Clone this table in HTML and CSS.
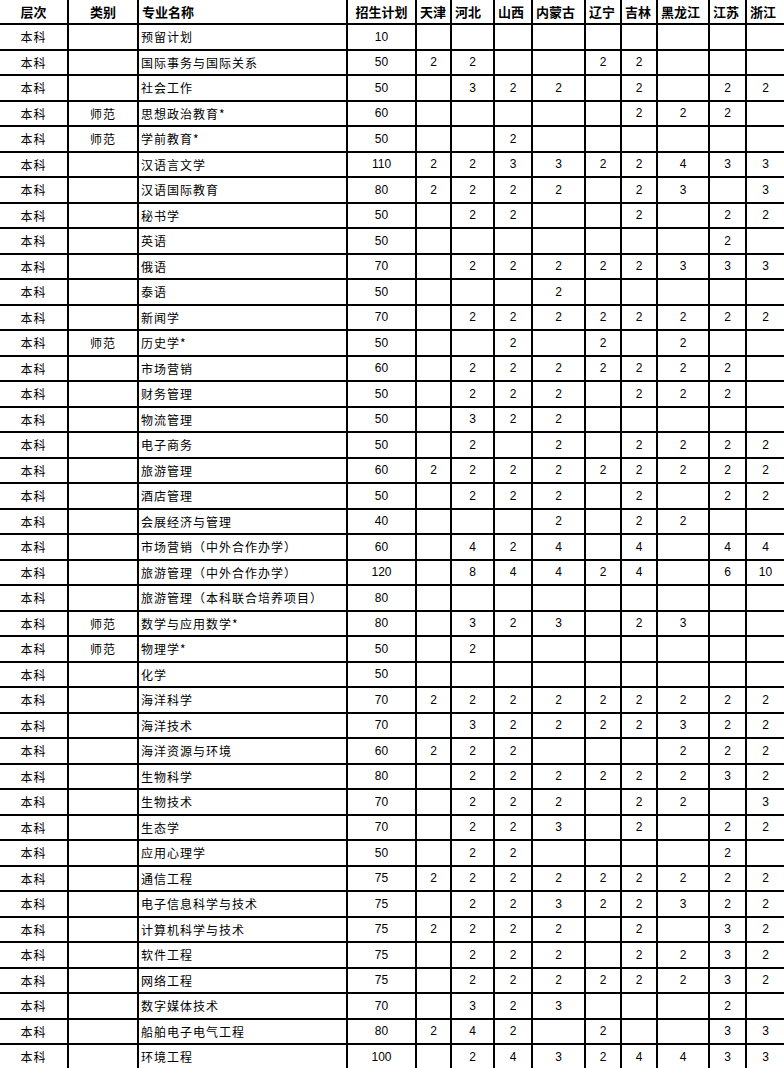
FILE: index.html
```html
<!DOCTYPE html>
<html lang="zh-CN">
<head>
<meta charset="utf-8">
<title>招生计划</title>
<link rel="stylesheet" href="styles.css">
</head>
<body>
<div class="sheet">
  <div class="h">层次</div><div class="h">类别</div><div class="h l">专业名称</div><div class="h">招生计划</div><div class="h l">天津</div><div class="h l">河北</div><div class="h l">山西</div><div class="h l">内蒙古</div><div class="h l">辽宁</div><div class="h l">吉林</div><div class="h l">黑龙江</div><div class="h l">江苏</div><div class="h l last">浙江</div>

  <div class="c">本科</div><div class="c"></div><div class="c l">预留计划</div><div class="n">10</div><div class="n"></div><div class="n"></div><div class="n"></div><div class="n"></div><div class="n"></div><div class="n"></div><div class="n"></div><div class="n"></div><div class="n last"></div>
  <div class="c">本科</div><div class="c"></div><div class="c l">国际事务与国际关系</div><div class="n">50</div><div class="n">2</div><div class="n">2</div><div class="n"></div><div class="n"></div><div class="n">2</div><div class="n">2</div><div class="n"></div><div class="n"></div><div class="n last"></div>
  <div class="c">本科</div><div class="c"></div><div class="c l">社会工作</div><div class="n">50</div><div class="n"></div><div class="n">3</div><div class="n">2</div><div class="n">2</div><div class="n"></div><div class="n">2</div><div class="n"></div><div class="n">2</div><div class="n last">2</div>
  <div class="c">本科</div><div class="c">师范</div><div class="c l">思想政治教育*</div><div class="n">60</div><div class="n"></div><div class="n"></div><div class="n"></div><div class="n"></div><div class="n"></div><div class="n">2</div><div class="n">2</div><div class="n">2</div><div class="n last"></div>
  <div class="c">本科</div><div class="c">师范</div><div class="c l">学前教育*</div><div class="n">50</div><div class="n"></div><div class="n"></div><div class="n">2</div><div class="n"></div><div class="n"></div><div class="n"></div><div class="n"></div><div class="n"></div><div class="n last"></div>
  <div class="c">本科</div><div class="c"></div><div class="c l">汉语言文学</div><div class="n">110</div><div class="n">2</div><div class="n">2</div><div class="n">3</div><div class="n">3</div><div class="n">2</div><div class="n">2</div><div class="n">4</div><div class="n">3</div><div class="n last">3</div>
  <div class="c">本科</div><div class="c"></div><div class="c l">汉语国际教育</div><div class="n">80</div><div class="n">2</div><div class="n">2</div><div class="n">2</div><div class="n">2</div><div class="n"></div><div class="n">2</div><div class="n">3</div><div class="n"></div><div class="n last">3</div>
  <div class="c">本科</div><div class="c"></div><div class="c l">秘书学</div><div class="n">50</div><div class="n"></div><div class="n">2</div><div class="n">2</div><div class="n"></div><div class="n"></div><div class="n">2</div><div class="n"></div><div class="n">2</div><div class="n last">2</div>
  <div class="c">本科</div><div class="c"></div><div class="c l">英语</div><div class="n">50</div><div class="n"></div><div class="n"></div><div class="n"></div><div class="n"></div><div class="n"></div><div class="n"></div><div class="n"></div><div class="n">2</div><div class="n last"></div>
  <div class="c">本科</div><div class="c"></div><div class="c l">俄语</div><div class="n">70</div><div class="n"></div><div class="n">2</div><div class="n">2</div><div class="n">2</div><div class="n">2</div><div class="n">2</div><div class="n">3</div><div class="n">3</div><div class="n last">3</div>
  <div class="c">本科</div><div class="c"></div><div class="c l">泰语</div><div class="n">50</div><div class="n"></div><div class="n"></div><div class="n"></div><div class="n">2</div><div class="n"></div><div class="n"></div><div class="n"></div><div class="n"></div><div class="n last"></div>
  <div class="c">本科</div><div class="c"></div><div class="c l">新闻学</div><div class="n">70</div><div class="n"></div><div class="n">2</div><div class="n">2</div><div class="n">2</div><div class="n">2</div><div class="n">2</div><div class="n">2</div><div class="n">2</div><div class="n last">2</div>
  <div class="c">本科</div><div class="c">师范</div><div class="c l">历史学*</div><div class="n">50</div><div class="n"></div><div class="n"></div><div class="n">2</div><div class="n"></div><div class="n">2</div><div class="n"></div><div class="n">2</div><div class="n"></div><div class="n last"></div>
  <div class="c">本科</div><div class="c"></div><div class="c l">市场营销</div><div class="n">60</div><div class="n"></div><div class="n">2</div><div class="n">2</div><div class="n">2</div><div class="n">2</div><div class="n">2</div><div class="n">2</div><div class="n">2</div><div class="n last"></div>
  <div class="c">本科</div><div class="c"></div><div class="c l">财务管理</div><div class="n">50</div><div class="n"></div><div class="n">2</div><div class="n">2</div><div class="n">2</div><div class="n"></div><div class="n">2</div><div class="n">2</div><div class="n">2</div><div class="n last"></div>
  <div class="c">本科</div><div class="c"></div><div class="c l">物流管理</div><div class="n">50</div><div class="n"></div><div class="n">3</div><div class="n">2</div><div class="n">2</div><div class="n"></div><div class="n"></div><div class="n"></div><div class="n"></div><div class="n last"></div>
  <div class="c">本科</div><div class="c"></div><div class="c l">电子商务</div><div class="n">50</div><div class="n"></div><div class="n">2</div><div class="n"></div><div class="n">2</div><div class="n"></div><div class="n">2</div><div class="n">2</div><div class="n">2</div><div class="n last">2</div>
  <div class="c">本科</div><div class="c"></div><div class="c l">旅游管理</div><div class="n">60</div><div class="n">2</div><div class="n">2</div><div class="n">2</div><div class="n">2</div><div class="n">2</div><div class="n">2</div><div class="n">2</div><div class="n">2</div><div class="n last">2</div>
  <div class="c">本科</div><div class="c"></div><div class="c l">酒店管理</div><div class="n">50</div><div class="n"></div><div class="n">2</div><div class="n">2</div><div class="n">2</div><div class="n"></div><div class="n">2</div><div class="n"></div><div class="n">2</div><div class="n last">2</div>
  <div class="c">本科</div><div class="c"></div><div class="c l">会展经济与管理</div><div class="n">40</div><div class="n"></div><div class="n"></div><div class="n"></div><div class="n">2</div><div class="n"></div><div class="n">2</div><div class="n">2</div><div class="n"></div><div class="n last"></div>
  <div class="c">本科</div><div class="c"></div><div class="c l">市场营销（中外合作办学）</div><div class="n">60</div><div class="n"></div><div class="n">4</div><div class="n">2</div><div class="n">4</div><div class="n"></div><div class="n">4</div><div class="n"></div><div class="n">4</div><div class="n last">4</div>
  <div class="c">本科</div><div class="c"></div><div class="c l">旅游管理（中外合作办学）</div><div class="n">120</div><div class="n"></div><div class="n">8</div><div class="n">4</div><div class="n">4</div><div class="n">2</div><div class="n">4</div><div class="n"></div><div class="n">6</div><div class="n last">10</div>
  <div class="c">本科</div><div class="c"></div><div class="c l">旅游管理（本科联合培养项目）</div><div class="n">80</div><div class="n"></div><div class="n"></div><div class="n"></div><div class="n"></div><div class="n"></div><div class="n"></div><div class="n"></div><div class="n"></div><div class="n last"></div>
  <div class="c">本科</div><div class="c">师范</div><div class="c l">数学与应用数学*</div><div class="n">80</div><div class="n"></div><div class="n">3</div><div class="n">2</div><div class="n">3</div><div class="n"></div><div class="n">2</div><div class="n">3</div><div class="n"></div><div class="n last"></div>
  <div class="c">本科</div><div class="c">师范</div><div class="c l">物理学*</div><div class="n">50</div><div class="n"></div><div class="n">2</div><div class="n"></div><div class="n"></div><div class="n"></div><div class="n"></div><div class="n"></div><div class="n"></div><div class="n last"></div>
  <div class="c">本科</div><div class="c"></div><div class="c l">化学</div><div class="n">50</div><div class="n"></div><div class="n"></div><div class="n"></div><div class="n"></div><div class="n"></div><div class="n"></div><div class="n"></div><div class="n"></div><div class="n last"></div>
  <div class="c">本科</div><div class="c"></div><div class="c l">海洋科学</div><div class="n">70</div><div class="n">2</div><div class="n">2</div><div class="n">2</div><div class="n">2</div><div class="n">2</div><div class="n">2</div><div class="n">2</div><div class="n">2</div><div class="n last">2</div>
  <div class="c">本科</div><div class="c"></div><div class="c l">海洋技术</div><div class="n">70</div><div class="n"></div><div class="n">3</div><div class="n">2</div><div class="n">2</div><div class="n">2</div><div class="n">2</div><div class="n">3</div><div class="n">2</div><div class="n last">2</div>
  <div class="c">本科</div><div class="c"></div><div class="c l">海洋资源与环境</div><div class="n">60</div><div class="n">2</div><div class="n">2</div><div class="n">2</div><div class="n"></div><div class="n"></div><div class="n"></div><div class="n">2</div><div class="n">2</div><div class="n last">2</div>
  <div class="c">本科</div><div class="c"></div><div class="c l">生物科学</div><div class="n">80</div><div class="n"></div><div class="n">2</div><div class="n">2</div><div class="n">2</div><div class="n">2</div><div class="n">2</div><div class="n">2</div><div class="n">3</div><div class="n last">2</div>
  <div class="c">本科</div><div class="c"></div><div class="c l">生物技术</div><div class="n">70</div><div class="n"></div><div class="n">2</div><div class="n">2</div><div class="n">2</div><div class="n"></div><div class="n">2</div><div class="n">2</div><div class="n"></div><div class="n last">3</div>
  <div class="c">本科</div><div class="c"></div><div class="c l">生态学</div><div class="n">70</div><div class="n"></div><div class="n">2</div><div class="n">2</div><div class="n">3</div><div class="n"></div><div class="n">2</div><div class="n"></div><div class="n">2</div><div class="n last">2</div>
  <div class="c">本科</div><div class="c"></div><div class="c l">应用心理学</div><div class="n">50</div><div class="n"></div><div class="n">2</div><div class="n">2</div><div class="n"></div><div class="n"></div><div class="n"></div><div class="n"></div><div class="n">2</div><div class="n last"></div>
  <div class="c">本科</div><div class="c"></div><div class="c l">通信工程</div><div class="n">75</div><div class="n">2</div><div class="n">2</div><div class="n">2</div><div class="n">2</div><div class="n">2</div><div class="n">2</div><div class="n">2</div><div class="n">2</div><div class="n last">2</div>
  <div class="c">本科</div><div class="c"></div><div class="c l">电子信息科学与技术</div><div class="n">75</div><div class="n"></div><div class="n">2</div><div class="n">2</div><div class="n">3</div><div class="n">2</div><div class="n">2</div><div class="n">3</div><div class="n">2</div><div class="n last">2</div>
  <div class="c">本科</div><div class="c"></div><div class="c l">计算机科学与技术</div><div class="n">75</div><div class="n">2</div><div class="n">2</div><div class="n">2</div><div class="n">2</div><div class="n"></div><div class="n">2</div><div class="n"></div><div class="n">3</div><div class="n last">2</div>
  <div class="c">本科</div><div class="c"></div><div class="c l">软件工程</div><div class="n">75</div><div class="n"></div><div class="n">2</div><div class="n">2</div><div class="n">2</div><div class="n"></div><div class="n">2</div><div class="n">2</div><div class="n">3</div><div class="n last">2</div>
  <div class="c">本科</div><div class="c"></div><div class="c l">网络工程</div><div class="n">75</div><div class="n"></div><div class="n">2</div><div class="n">2</div><div class="n">2</div><div class="n">2</div><div class="n">2</div><div class="n">2</div><div class="n">3</div><div class="n last">2</div>
  <div class="c">本科</div><div class="c"></div><div class="c l">数字媒体技术</div><div class="n">70</div><div class="n"></div><div class="n">3</div><div class="n">2</div><div class="n">3</div><div class="n"></div><div class="n"></div><div class="n"></div><div class="n">2</div><div class="n last"></div>
  <div class="c">本科</div><div class="c"></div><div class="c l">船舶电子电气工程</div><div class="n">80</div><div class="n">2</div><div class="n">4</div><div class="n">2</div><div class="n"></div><div class="n">2</div><div class="n"></div><div class="n"></div><div class="n">3</div><div class="n last">3</div>
  <div class="c">本科</div><div class="c"></div><div class="c l">环境工程</div><div class="n">100</div><div class="n"></div><div class="n">2</div><div class="n">4</div><div class="n">3</div><div class="n">2</div><div class="n">4</div><div class="n">4</div><div class="n">3</div><div class="n last">3</div>
</div>
</body>
</html>
```

FILE: styles.css
```css
html, body {
  margin: 0;
  padding: 0;
  background: #fff;
  overflow: hidden;
}

.sheet {
  display: grid;
  grid-template-columns: 69px 70px 209px 69px 35px 43px 38px 53px 36px 36px 52px 37px 37px;
  grid-template-rows: 25px;
  grid-auto-rows: 25.5px;
  width: 784px;
  color: #000;
}

.sheet > div {
  box-sizing: border-box;
  border-right: 2px solid #000;
  border-bottom: 2px solid #000;
  display: flex;
  align-items: center;
  justify-content: center;
  white-space: nowrap;
  overflow: hidden;
}

.sheet > div.last {
  border-right: none;
}

.h {
  font-family: "Noto Sans CJK SC", "Liberation Sans", sans-serif;
  font-weight: bold;
  font-size: 13px;
}

.h.l {
  justify-content: flex-start;
  padding-left: 3px;
}

.c {
  font-family: "Noto Sans CJK SC", "Liberation Sans", sans-serif;
  font-size: 12px;
  letter-spacing: 1px;
}

.c.l {
  justify-content: flex-start;
  padding-left: 2px;
}

.n {
  font-family: "Liberation Sans", Arial, sans-serif;
  font-size: 12px;
}
```
